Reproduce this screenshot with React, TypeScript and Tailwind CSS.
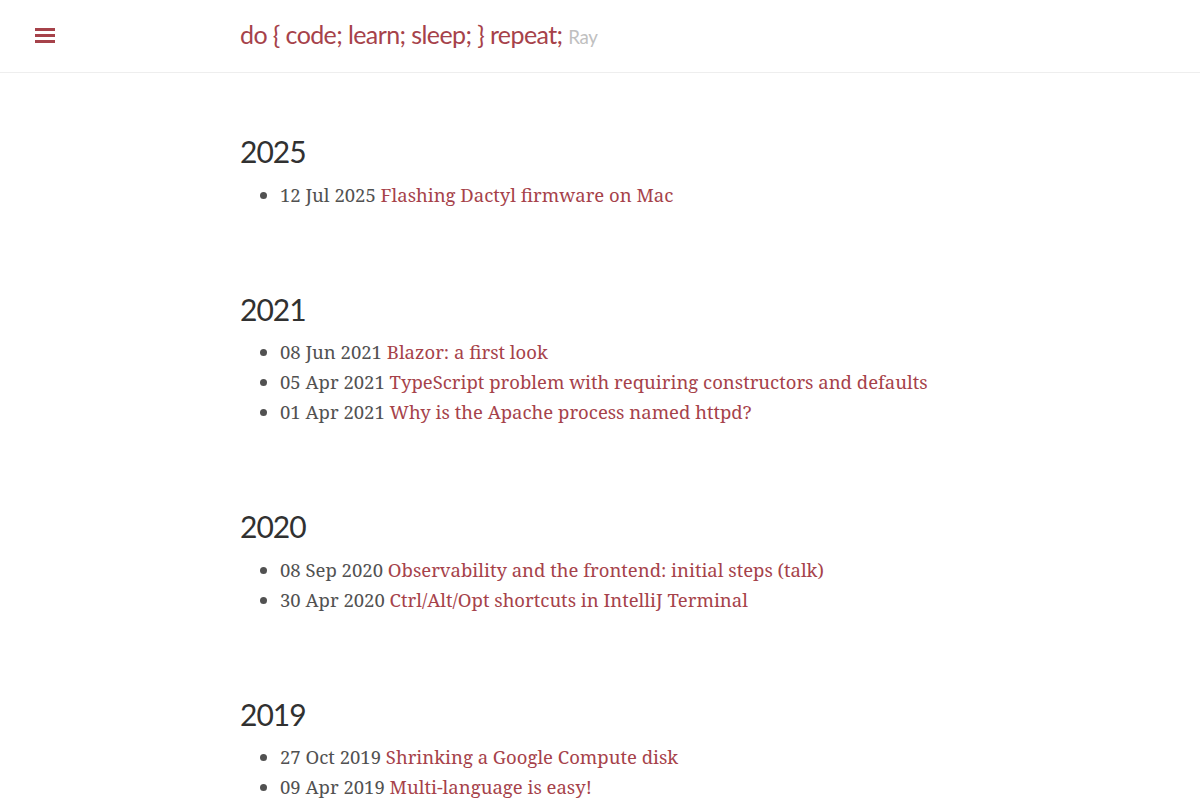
type Post = { date: string; title: string };
type Year = { year: string; posts: Post[] };

const years: Year[] = [
  { year: "2025", posts: [{ date: "12 Jul 2025", title: "Flashing Dactyl firmware on Mac" }] },
  {
    year: "2021",
    posts: [
      { date: "08 Jun 2021", title: "Blazor: a first look" },
      { date: "05 Apr 2021", title: "TypeScript problem with requiring constructors and defaults" },
      { date: "01 Apr 2021", title: "Why is the Apache process named httpd?" },
    ],
  },
  {
    year: "2020",
    posts: [
      { date: "08 Sep 2020", title: "Observability and the frontend: initial steps (talk)" },
      { date: "30 Apr 2020", title: "Ctrl/Alt/Opt shortcuts in IntelliJ Terminal" },
    ],
  },
  {
    year: "2019",
    posts: [
      { date: "27 Oct 2019", title: "Shrinking a Google Compute disk" },
      { date: "09 Apr 2019", title: "Multi-language is easy!" },
    ],
  },
];

export default function App() {
  return (
    <div className="relative min-h-screen bg-white">
      <button className="absolute left-[35px] top-[28px] flex flex-col gap-[3px]" aria-label="Toggle sidebar">
        <span className="block h-[3px] w-[20px] bg-[#a6424a]" />
        <span className="block h-[3px] w-[20px] bg-[#a6424a]" />
        <span className="block h-[3px] w-[20px] bg-[#a6424a]" />
      </button>
      <header className="border-b border-[#eeeeee] pt-[19px] pb-[20px]">
        <div className="mx-auto max-w-[760px] px-5">
          <h3 className="font-['Lato',sans-serif] text-[25px] leading-[31px] tracking-[-0.6px] text-[#a6424a]">
            do {"{"} code; learn; sleep; {"}"} repeat;{" "}
            <small className="text-[18.75px] tracking-[-0.3px] text-[#c0c0c0]">Ray</small>
          </h3>
        </div>
      </header>
      <main className="mx-auto max-w-[760px] px-5 pt-[60px]">
        {years.map((y, i) => (
          <section key={y.year} className={i === 0 ? "" : "mt-[81px]"}>
            <h2 className="mb-[9px] font-['Lato',sans-serif] text-[30px] leading-[37.5px] tracking-[-1px] text-[#313131]">
              {y.year}
            </h2>
            <ul className="list-disc pl-10 font-['Noto_Serif',serif] text-[18.5px] leading-[30px] text-[#515151]">
              {y.posts.map((p) => (
                <li key={p.title}>
                  {p.date}{" "}
                  <a href="#" className="text-[#a6424a]">
                    {p.title}
                  </a>
                </li>
              ))}
            </ul>
          </section>
        ))}
      </main>
    </div>
  );
}
